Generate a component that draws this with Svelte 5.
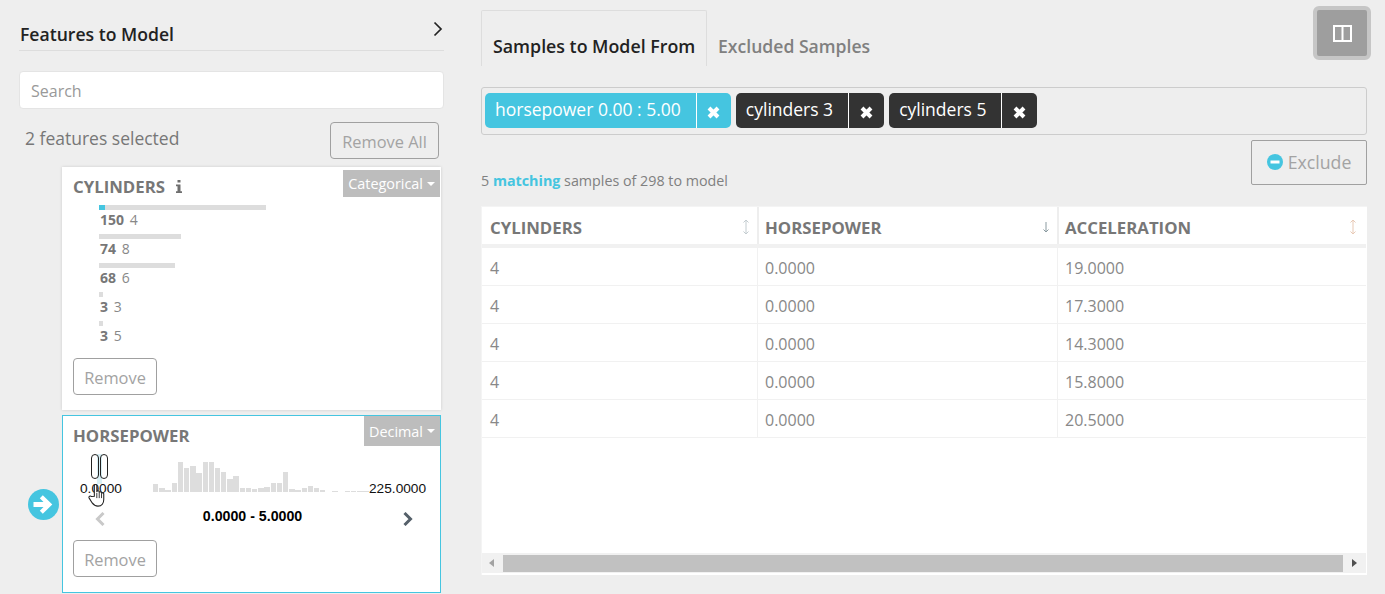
<script>
	// Bars of the cylinders card, width in px
	const categories = [
		{ count: 150, label: '4', width: 167, picked: true },
		{ count: 74, label: '8', width: 82 },
		{ count: 68, label: '6', width: 76 },
		{ count: 3, label: '3', width: 4 },
		{ count: 3, label: '5', width: 4 }
	];

	const histogram = [
		8, 4, 2, 9, 30, 24, 26, 19, 30, 30, 24, 20, 13, 16, 4, 4, 3, 4, 5, 9, 9, 20, 3, 2, 4, 6, 4, 2, 0,
		1, 0, 1, 1, 1, 1
	];

	const chips = [
		{ text: 'horsepower 0.00 : 5.00', accent: true },
		{ text: 'cylinders 3' },
		{ text: 'cylinders 5' }
	];

	const columns = [
		{ name: 'CYLINDERS', sort: 'none', tint: '#c3ccd0' },
		{ name: 'HORSEPOWER', sort: 'down', tint: '#8a9aa0' },
		{ name: 'ACCELERATION', sort: 'none', tint: '#e8c9b5' }
	];

	const rows = [
		['4', '0.0000', '19.0000'],
		['4', '0.0000', '17.3000'],
		['4', '0.0000', '14.3000'],
		['4', '0.0000', '15.8000'],
		['4', '0.0000', '20.5000']
	];
</script>

<div class="page">
	<aside class="left">
		<div class="left-head">
			<h2>Features to Model</h2>
			<svg class="collapse" width="10" height="16" viewBox="0 0 10 16">
				<path d="M1.5 1.5 8 8l-6.5 6.5" fill="none" stroke="#222" stroke-width="1.7" />
			</svg>
		</div>
		<input class="search" placeholder="Search" />
		<div class="selected">
			<span>2 features selected</span>
			<button class="ghost remove-all">Remove All</button>
		</div>

		<div class="card-row">
			<div class="gutter"></div>
			<section class="card first">
				<div class="card-head">
					<span class="title">CYLINDERS</span>
					<svg class="info" width="8" height="13" viewBox="0 0 8 13">
						<path
							d="M2.5 0h3v2.6h-3zM1 4.4h4.5v6.8H7V13H1v-1.8h1.5v-5H1z"
							fill="#6f6f6f"
						/>
					</svg>
					<span class="type">Categorical<i class="caret"></i></span>
				</div>
				<ul class="bars">
					{#each categories as cat}
						<li>
							<div class="bar" style="width: {cat.width}px">
								{#if cat.picked}<div class="bar-picked"></div>{/if}
							</div>
							<div class="bar-text"><b>{cat.count}</b> {cat.label}</div>
						</li>
					{/each}
				</ul>
				<button class="ghost remove">Remove</button>
			</section>
		</div>

		<div class="card-row">
			<div class="gutter">
				<svg width="31" height="31" viewBox="0 0 31 31">
					<circle cx="15.5" cy="15.5" r="15.5" fill="#45c5e0" />
					<path
						d="M5.5 13h10L11.8 9.300l3-3 9.500 9.200-9.500 9.200-3-3 3.700-3.700h-10z"
						fill="#fff"
					/>
				</svg>
			</div>
			<section class="card second">
				<div class="card-head">
					<span class="title">HORSEPOWER</span>
					<span class="type">Decimal<i class="caret"></i></span>
				</div>
				<div class="slider">
					<span class="range-min">0.0000</span>
					<div class="hist">
						{#each histogram as h}
							<div class="hist-bar" style="height: {h}px"></div>
						{/each}
					</div>
					<span class="range-max">225.0000</span>
					<div class="range-fill"></div>
					<div class="handle handle-a"></div>
					<div class="handle handle-b"></div>
					<svg class="cursor" width="18" height="24" viewBox="0 0 20 27">
						<path
							d="M7 15V3.200c0-2 2.800-2 2.800 0V10c0-1.600 2.700-1.600 2.700 0v1c0-1.500 2.600-1.500 2.600 0v1c0-1.400 2.500-1.400 2.500 0v6.500c0 4-2 7.500-6.500 7.500-3 0-4.700-1-6.500-3.600L1.200 17c-1-1.700 1.200-3.200 2.600-1.800z"
							fill="#fff"
							stroke="#222"
							stroke-width="1.200"
						/>
						<path d="M9.800 11v6M12.500 11v6M15.100 12v5" stroke="#222" stroke-width="1" />
					</svg>
				</div>
				<div class="stepper">
					<svg width="10" height="14" viewBox="0 0 10 14">
						<path d="M8.500 1 2.500 7l6 6" fill="none" stroke="#c9c9c9" stroke-width="3" />
					</svg>
					<b>0.0000 - 5.0000</b>
					<svg width="10" height="14" viewBox="0 0 10 14">
						<path d="M1.500 1l6 6-6 6" fill="none" stroke="#55606a" stroke-width="3" />
					</svg>
				</div>
				<button class="ghost remove">Remove</button>
			</section>
		</div>
	</aside>

	<main class="right">
		<div class="tabs">
			<div class="tab active">Samples to Model From</div>
			<div class="tab">Excluded Samples</div>
			<button class="view-toggle" aria-label="Toggle view">
				<svg width="19" height="17" viewBox="0 0 19 17">
					<path d="M1 1h17v15H1zM9.500 1v15" fill="none" stroke="#fff" stroke-width="2" />
				</svg>
			</button>
		</div>

		<div class="chips">
			{#each chips as chip}
				<div class="chip" class:accent={chip.accent}>
					<span class="chip-text">{chip.text}</span>
					<span class="chip-x">
						<svg width="13" height="13" viewBox="0 0 13 13">
							<path d="M2 2l9 9M11 2l-9 9" stroke="#fff" stroke-width="4" />
						</svg>
					</span>
				</div>
			{/each}
		</div>

		<div class="summary">
			<span class="count">5 <b>matching</b> samples of 298 to model</span>
			<button class="ghost exclude">
				<svg width="16" height="16" viewBox="0 0 16 16">
					<circle cx="8" cy="8" r="8" fill="#45c5e0" />
					<rect x="3.500" y="6.500" width="9" height="3" fill="#fff" />
				</svg>
				Exclude
			</button>
		</div>

		<div class="table-wrap">
			<div class="thead">
				{#each columns as col}
					<div class="th">
						<span>{col.name}</span>
						{#if col.sort === 'down'}
							<svg width="8" height="16" viewBox="0 0 8 16">
								<path d="M4 3v10M1.500 10.500 4 13l2.500-2.500" fill="none" stroke={col.tint} />
							</svg>
						{:else}
							<svg width="8" height="18" viewBox="0 0 8 18">
								<path
									d="M4 2v14M1.500 4.500 4 2l2.500 2.500M1.500 13.500 4 16l2.500-2.500"
									fill="none"
									stroke={col.tint}
								/>
							</svg>
						{/if}
					</div>
				{/each}
			</div>
			<div class="tbody">
				{#each rows as row}
					<div class="tr">
						{#each row as cell}
							<div class="td">{cell}</div>
						{/each}
					</div>
				{/each}
			</div>
			<div class="scrollbar">
				<span class="arrow arrow-left"></span>
				<div class="thumb"></div>
				<span class="arrow arrow-right"></span>
			</div>
		</div>
	</main>
</div>

<style>
	:global(body) {
		background: #eee;
		font-family: 'Open Sans', sans-serif;
		color: #777;
		overflow: hidden;
	}

	.page {
		display: flex;
		height: 594px;
		overflow: hidden;
	}

	.left {
		width: 425px;
		margin-left: 19px;
		flex: none;
	}

	.left-head {
		display: flex;
		justify-content: space-between;
		height: 30px;
		margin-top: 20px;
		border-bottom: 1px solid #ddd;
	}

	h2 {
		margin: 3px 0 0 1px;
		font-size: 17.6px;
		line-height: 22px;
		font-weight: 600;
		color: #222;
	}

	.collapse {
		margin: 1px 1px 0 0;
	}

	.search {
		display: block;
		box-sizing: border-box;
		width: 100%;
		height: 38px;
		margin-top: 20px;
		padding: 2px 11px 0;
		border: 1px solid #e4e4e4;
		border-radius: 4px;
		background: #fff;
		font: 16px 'Open Sans', sans-serif;
	}

	.search::placeholder {
		color: #999;
	}

	.selected {
		display: flex;
		justify-content: space-between;
		align-items: flex-start;
		height: 45px;
		margin-top: 13px;
		padding: 0 5px 0 6px;
		font-size: 17.5px;
		line-height: 32px;
	}

	.ghost {
		box-sizing: border-box;
		padding: 2px 0 0;
		border: 1px solid #a0a0a0;
		border-radius: 4px;
		background: transparent;
		color: #a3a3a3;
		font-family: inherit;
		font-size: 16.4px;
	}

	.remove-all {
		width: 109px;
		height: 37px;
	}

	.card-row {
		display: flex;
		align-items: center;
		margin-bottom: 5px;
	}

	.gutter {
		width: 43px;
		flex: none;
		padding-left: 9px;
		box-sizing: border-box;
		line-height: 0;
	}

	.card {
		position: relative;
		box-sizing: border-box;
		width: 379px;
		padding: 0 11px;
		background: #fff;
	}

	.first {
		height: 243px;
		box-shadow: 0 0 3px rgba(0, 0, 0, 0.14);
	}

	.second {
		height: 178px;
		border: 1px solid #45c5e0;
		padding: 0 10px;
	}

	.card-head {
		display: flex;
		align-items: center;
		height: 38px;
	}

	.title {
		font-size: 16.8px;
		font-weight: 700;
		color: #777;
	}

	.info {
		margin-left: 10px;
	}

	.type {
		position: absolute;
		top: 3px;
		right: 1px;
		display: flex;
		align-items: center;
		height: 27px;
		padding: 0 5px 0 5px;
		background: #bdbdbd;
		color: #fff;
		font-size: 14.4px;
	}

	.caret {
		width: 0;
		height: 0;
		margin-left: 4px;
		border-left: 4px solid transparent;
		border-right: 4px solid transparent;
		border-top: 4px solid #fff;
	}

	.second .type {
		top: 0;
		right: 0;
		height: 30px;
	}

	.bars {
		margin: 0;
		padding: 0 0 0 26px;
		list-style: none;
		height: 153px;
	}

	.bars li {
		height: 29px;
	}

	.bar {
		height: 5px;
		background: #ddd;
	}

	.bar-picked {
		width: 6px;
		height: 5px;
		background: #45c5e0;
	}

	.bar-text {
		padding-left: 1px;
		font-size: 14px;
		line-height: 20px;
		color: #888;
	}

	.bar-text b {
		margin-right: 2px;
		color: #777;
	}

	.remove {
		display: block;
		width: 84px;
		height: 37px;
	}

	.slider {
		position: relative;
		display: flex;
		align-items: flex-end;
		height: 38px;
		color: #111;
		font-family: 'Liberation Sans', sans-serif;
		font-size: 13.7px;
	}

	.range-min {
		width: 80px;
		padding-left: 7px;
		box-sizing: border-box;
		line-height: 16px;
		margin-bottom: -5px;
	}

	.range-max {
		line-height: 16px;
		margin-bottom: -5px;
	}

	.hist {
		display: flex;
		align-items: flex-end;
		gap: 0.800px;
		width: 216px;
		flex: none;
	}

	.hist-bar {
		width: 5.400px;
		flex: none;
		background: #ddd;
	}

	.handle {
		position: absolute;
		top: 0;
		box-sizing: border-box;
		width: 8px;
		height: 25px;
		border: 1px solid #222;
		border-radius: 4px;
	}

	.handle-a {
		left: 18px;
	}

	.handle-b {
		left: 27px;
	}

	.range-fill {
		position: absolute;
		left: 24px;
		top: 0;
		width: 5px;
		height: 30px;
		background: #d9f0f6;
	}

	.cursor {
		position: absolute;
		left: 15px;
		top: 29px;
	}

	.stepper {
		display: flex;
		justify-content: space-between;
		align-items: center;
		width: 318px;
		height: 27px;
		margin: 13px 0 8px 22px;
		color: #000;
		font-family: 'Liberation Sans', sans-serif;
		font-size: 14.200px;
	}

	.stepper b {
		margin: -6px 3px 0 0;
	}

	.right {
		width: 886px;
		margin-left: 37px;
		flex: none;
	}

	.tabs {
		position: relative;
		display: flex;
		height: 87px;
		padding-top: 10px;
		box-sizing: border-box;
	}

	.tab {
		box-sizing: border-box;
		height: 56px;
		padding: 23px 11px 0 11px;
		font-size: 17.6px;
		line-height: 26px;
		font-weight: 600;
		color: #808080;
		white-space: nowrap;
	}

	.tab.active {
		width: 226px;
		padding-top: 22px;
		border: 1px solid #ddd;
		border-bottom: none;
		border-radius: 2px 2px 0 0;
		font-size: 17.8px;
		color: #222;
	}

	.view-toggle {
		position: absolute;
		top: 6px;
		right: -4px;
		box-sizing: border-box;
		width: 58px;
		height: 54px;
		padding: 0;
		display: flex;
		align-items: center;
		justify-content: center;
		border: 4px solid #c6c6c6;
		border-radius: 6px;
		background: #9e9e9e;
	}

	.chips {
		box-sizing: border-box;
		display: flex;
		gap: 5px;
		height: 48px;
		padding: 5px 3px;
		border: 1px solid #ccc;
		border-radius: 3px;
	}

	.chip {
		display: flex;
		height: 35px;
		border-radius: 5px;
		background: #333;
		color: #fff;
		overflow: hidden;
	}

	.chip.accent {
		background: #45c5e0;
	}

	.chip-text {
		padding: 0 15px 0 10px;
		font-size: 17.5px;
		line-height: 32px;
		border-right: 1px solid #fff;
	}

	.chip-x {
		display: flex;
		align-items: center;
		justify-content: center;
		width: 35px;
		padding-top: 4px;
		box-sizing: border-box;
	}

	.accent .chip-x {
		width: 34px;
	}

	.summary {
		display: flex;
		justify-content: space-between;
		align-items: flex-end;
		height: 45px;
		margin-top: 5px;
	}

	.count {
		font-size: 14.300px;
		line-height: 18px;
		margin-bottom: -5px;
		color: #808080;
	}

	.count b {
		color: #45c5e0;
	}

	.exclude {
		display: flex;
		align-items: center;
		justify-content: center;
		gap: 5px;
		width: 116px;
		height: 45px;
		padding: 0 0 2px;
		border-radius: 2px;
		font-size: 17.7px;
	}

	.table-wrap {
		box-sizing: border-box;
		width: 886px;
		height: 369px;
		margin-top: 21px;
		padding: 0 1px 2px 0;
		border-top: 1px solid #f4f4f4;
		border-left: 1px solid #f4f4f4;
		background: #fff;
		display: flex;
		flex-direction: column;
	}

	.thead,
	.tr {
		display: grid;
		grid-template-columns: 275px 300px 1fr;
	}

	.thead {
		height: 37px;
		flex: none;
		border-bottom: 4px solid #f1f1f1;
		box-sizing: content-box;
	}

	.th {
		display: flex;
		align-items: center;
		justify-content: space-between;
		padding: 3px 7px 0 6px;
		font-size: 16.8px;
		font-weight: 700;
		border-left: 2px solid #eee;
	}

	.th:first-child {
		padding-left: 8px;
		border-left: none;
	}

	.th:last-child {
		padding-right: 9px;
	}

	.td:first-child {
		padding-left: 8px;
		border-left: none;
	}

	.tbody {
		flex: 1;
	}

	.tr {
		height: 38px;
		box-sizing: border-box;
		border-bottom: 1px solid #f1f1f1;
	}

	.td {
		padding: 2px 8px 0 7px;
		font-size: 16px;
		line-height: 35px;
		color: #888;
		border-left: 1px solid #f1f1f1;
		line-height: 36px;
	}

	.scrollbar {
		display: flex;
		align-items: center;
		height: 20px;
		background: #f1f1f1;
	}

	.thumb {
		width: 840px;
		height: 17px;
		margin-left: 9px;
		background: #c1c1c1;
	}

	.arrow {
		width: 0;
		height: 0;
		border-top: 4px solid transparent;
		border-bottom: 4px solid transparent;
	}

	.arrow-left {
		margin-left: 7px;
		border-right: 5px solid #a3a3a3;
	}

	.arrow-right {
		margin-left: 9px;
		border-left: 5px solid #505050;
	}
</style>
